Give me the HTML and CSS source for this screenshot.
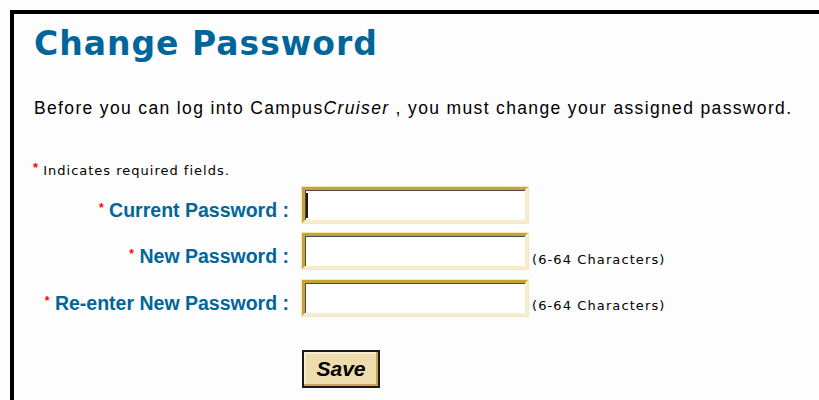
FILE: index.html
```html
<!DOCTYPE html>
<html>
<head>
<meta charset="utf-8">
<title>Change Password</title>
<link rel="stylesheet" href="styles.css">
</head>
<body>
<div class="frame">
  <h1 class="title">Change Password</h1>
  <p class="intro">Before you can log into Campus<i>Cruiser</i> , you must change your assigned password.</p>
  <p class="required"><span class="star">*</span> Indicates required fields.</p>
  <form class="form">
    <label class="label"><span class="star">*</span> Current Password :</label>
    <span class="field"><input class="input" type="password"><span class="caret"></span></span>
    <span class="hint"></span>

    <label class="label"><span class="star">*</span> New Password :</label>
    <span class="field"><input class="input" type="password"></span>
    <span class="hint">(6-64 Characters)</span>

    <label class="label"><span class="star">*</span> Re-enter New Password :</label>
    <span class="field"><input class="input" type="password"></span>
    <span class="hint">(6-64 Characters)</span>

    <span></span>
    <span class="actions"><button class="save" type="button">Save</button></span>
    <span></span>
  </form>
</div>
</body>
</html>
```

FILE: styles.css
```css
html, body {
  margin: 0;
  padding: 0;
  background: #fdfdfd;
  overflow: hidden;
}

.frame {
  margin: 10px 0 0 10px;
  border-top: 4px solid #000;
  border-left: 4px solid #000;
  height: 400px;
  padding: 10px 0 0 20px;
  font-family: "Liberation Sans", Arial, sans-serif;
  color: #000;
}

.title {
  margin: 0;
  font-family: "DejaVu Sans", Verdana, sans-serif;
  font-weight: bold;
  font-size: 33px;
  line-height: 40px;
  color: #00669a;
  letter-spacing: 1px;
}

.intro {
  margin: 34px 0 0 0;
  font-size: 17.5px;
  line-height: 20px;
  letter-spacing: 1.35px;
}

.required {
  margin: 42px 0 0 -1px;
  font-family: "DejaVu Sans", Verdana, sans-serif;
  font-size: 13px;
  line-height: 16px;
  letter-spacing: 1px;
}

.star {
  color: #ff0000;
  font-family: "Liberation Sans", Arial, sans-serif;
  font-size: 13px;
  font-weight: bold;
  letter-spacing: 0;
  vertical-align: 3px;
}

.form {
  display: grid;
  grid-template-columns: 255px auto 1fr;
  column-gap: 13px;
  row-gap: 10.5px;
  margin-top: 7.5px;
  align-items: end;
}

.label {
  text-align: right;
  padding-bottom: 2px;
  font-family: "Liberation Sans", Arial, sans-serif;
  font-weight: bold;
  font-size: 19.5px;
  line-height: 22px;
  color: #00669a;
}

.label .star {
  font-size: 12px;
  vertical-align: 5px;
}

.field {
  display: block;
  position: relative;
}

.input {
  display: block;
  box-sizing: border-box;
  width: 226px;
  height: 36px;
  margin: 0;
  padding: 0 4px;
  background: #fff;
  border: 3px solid;
  border-color: #c8a238 #f7eccb #f7eccb #c8a238;
  box-shadow: inset 1px 1px 0 #4a4a4a, 0 0 0 1px #f5e8b8;
  outline: none;
}

/* text cursor in the focused field */
.caret {
  position: absolute;
  left: 4px;
  top: 6px;
  width: 2px;
  height: 25px;
  background: #1a1a1a;
}

.hint {
  margin-left: -9px;
  padding-bottom: 1.5px;
  font-family: "DejaVu Sans", Verdana, sans-serif;
  font-size: 13px;
  line-height: 16px;
  letter-spacing: 1.1px;
}

.actions {
  display: block;
  padding-top: 23.5px;
}

.save {
  display: block;
  width: 78px;
  height: 38px;
  margin: 0;
  padding: 0;
  background: #ecdcae;
  border: 2px solid #1a1a1a;
  box-shadow: inset -2px -2px 0 #c6a552, inset 2px 2px 0 #f7ecd0;
  font-family: "Liberation Sans", Arial, sans-serif;
  font-weight: bold;
  font-style: italic;
  font-size: 21px;
  color: #000;
}
```
